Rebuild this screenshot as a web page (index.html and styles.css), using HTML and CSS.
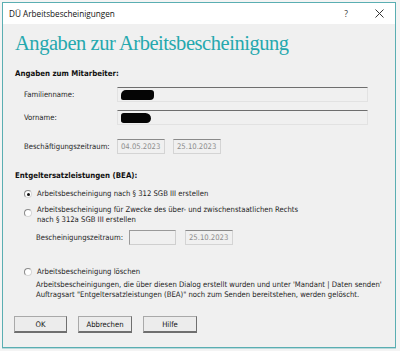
FILE: index.html
```html
<!DOCTYPE html>
<html lang="de">
<head>
<meta charset="utf-8">
<title>DÜ Arbeitsbescheinigungen</title>
<link rel="stylesheet" href="styles.css">
</head>
<body>
<div class="win">
  <div class="titlebar">
    <span class="title">DÜ Arbeitsbescheinigungen</span>
    <span class="tb-btns">
      <span class="help">?</span>
      <svg class="close" width="9" height="9" viewBox="0 0 9 9"><path d="M0.5 0.5 L8.5 8.5 M8.5 0.5 L0.5 8.5" stroke="#333" stroke-width="1" fill="none"/></svg>
    </span>
  </div>
  <div class="content">
    <h1 class="heading">Angaben zur Arbeitsbescheinigung</h1>

    <div class="group-title first">Angaben zum Mitarbeiter:</div>
    <div class="form">
      <div class="row">
        <span class="label">Familienname:</span>
        <div class="input name"><span class="redact r1"></span></div>
      </div>
      <div class="row">
        <span class="label">Vorname:</span>
        <div class="input name"><span class="redact r2"></span></div>
      </div>
      <div class="row dates">
        <span class="label">Beschäftigungszeitraum:</span>
        <div class="input date">04.05.2023</div>
        <div class="input date">25.10.2023</div>
      </div>
    </div>

    <div class="group-title bea">Entgeltersatzleistungen (BEA):</div>
    <div class="option opt1">
      <span class="radio checked"></span>
      <span class="opt-text">Arbeitsbescheinigung nach § 312 SGB III erstellen</span>
    </div>
    <div class="option opt2">
      <span class="radio"></span>
      <span class="opt-text">Arbeitsbescheinigung für Zwecke des über- und zwischenstaatlichen Rechts<br>nach § 312a SGB III erstellen</span>
    </div>
    <div class="row period">
      <span class="label plabel">Bescheinigungszeitraum:</span>
      <div class="input pdate empty"></div>
      <div class="input pdate">25.10.2023</div>
    </div>
    <div class="option opt3">
      <span class="radio"></span>
      <span class="opt-text">Arbeitsbescheinigung löschen</span>
    </div>
    <p class="desc">Arbeitsbescheinigungen, die über diesen Dialog erstellt wurden und unter 'Mandant | Daten senden'<br>Auftragsart "Entgeltersatzleistungen (BEA)" noch zum Senden bereitstehen, werden gelöscht.</p>

    <div class="buttons">
      <button class="btn">OK</button>
      <button class="btn">Abbrechen</button>
      <button class="btn">Hilfe</button>
    </div>
  </div>
</div>
</body>
</html>
```

FILE: styles.css
```css
html, body {
  margin: 0;
  padding: 0;
}
body {
  background: #f4f4f4;
  width: 400px;
  height: 351px;
  overflow: hidden;
  font-family: "DejaVu Sans Condensed", "DejaVu Sans", sans-serif;
  font-stretch: condensed;
  font-size: 7.65px;
  color: #1e1e1e;
}
.win {
  margin: 2px 0 0 2px;
  width: 392px;
  border: 1px solid #5aaeb2;
  background: #f0f0f0;
  box-shadow: 0 1px 0 #b9d9db;
}
.titlebar {
  height: 21px;
  background: #ffffff;
  display: flex;
  align-items: center;
  justify-content: space-between;
}
.title {
  font-family: "Open Sans", "Noto Sans", sans-serif;
  font-stretch: normal;
  font-size: 8.2px;
  color: #111;
  margin-left: 6px;
  margin-top: -1px;
}
.tb-btns {
  display: flex;
  align-items: center;
  margin-right: 11px;
}
.help {
  font-family: "Open Sans", "Noto Sans", sans-serif;
  font-stretch: normal;
  font-size: 8.5px;
  color: #333;
  margin-right: 27px;
  margin-top: -1px;
}
.close {
  display: block;
  margin-top: -1px;
}
.content {
  padding: 7px 0 14px 12px;
}
.heading {
  margin: 0;
  font-family: "Liberation Serif", serif;
  font-weight: normal;
  font-size: 20.5px;
  letter-spacing: -0.45px;
  line-height: 24px;
  color: #25a8ae;
}
.group-title {
  font-weight: bold;
  font-size: 7.8px;
  line-height: 12px;
  color: #111;
}
.group-title.first {
  margin-top: 13px;
}
.form {
  margin-top: 7px;
  margin-left: 9px;
  display: flex;
  flex-direction: column;
  gap: 8px;
}
.row {
  display: flex;
  align-items: center;
}
.row.dates {
  margin-top: 6px;
  gap: 8px;
}
.label {
  width: 93px;
  flex: none;
}
.row.dates .label {
  margin-right: -8px;
}
.input {
  height: 15px;
  box-sizing: border-box;
  background: #f0f0f0;
  border: 1px solid #e2e2e2;
  border-top-color: #6e6e6e;
  position: relative;
  display: flex;
  align-items: center;
  padding-left: 3px;
  color: #8d8d8d;
}
.input.name {
  width: 251px;
}
.input.date {
  width: 48px;
  border-color: #d4d4d4;
  border-top-color: #8a8a8a;
}
.redact {
  display: block;
  background: #050505;
  height: 10px;
  border-radius: 5px 3px 4px 2px;
}
.redact.r1 {
  width: 33px;
  margin-left: 0;
}
.redact.r2 {
  width: 30px;
  border-radius: 3px 6px 5px 3px;
}
.group-title.bea {
  margin-top: 16px;
}
.option {
  display: flex;
  align-items: flex-start;
  margin-left: 9px;
  line-height: 10px;
}
.opt1 {
  margin-top: 7px;
}
.opt2 {
  margin-top: 6px;
}
.opt2 .radio {
  margin-top: 4px;
}
.opt3 {
  margin-top: 22px;
}
.radio {
  width: 8px;
  height: 8px;
  box-sizing: border-box;
  border-radius: 50%;
  border: 1px solid #8a8a8a;
  border-right-color: #d6d6d6;
  border-bottom-color: #d6d6d6;
  background: #ffffff;
  margin: 1px 5px 0 0;
  flex: none;
  display: flex;
  align-items: center;
  justify-content: center;
}
.radio.checked::after {
  content: "";
  width: 3px;
  height: 3px;
  border-radius: 50%;
  background: #111;
}
.row.period {
  margin-top: 5px;
  margin-left: 21px;
  gap: 9px;
}
.plabel {
  width: 93px;
  margin-right: -9px;
}
.input.pdate {
  width: 48px;
  border-color: #d4d4d4;
  border-top-color: #8a8a8a;
}
.input.pdate.empty {
  width: 47px;
  border-color: #9a9a9a;
  border-right-color: #cfcfcf;
  border-bottom-color: #cfcfcf;
}
.desc {
  margin: 3px 0 0 21px;
  line-height: 10px;
}
.buttons {
  margin-top: 16px;
  display: flex;
  gap: 11px;
  margin-left: -1px;
}
.btn {
  width: 53px;
  height: 17px;
  box-sizing: border-box;
  padding: 0;
  font-family: inherit;
  font-stretch: condensed;
  font-size: 7.65px;
  color: #111;
  background: #ececec;
  border: 1px solid #a9a9a9;
  border-right-color: #6f6f6f;
  border-bottom: 2px solid #6f6f6f;
}
.btn + .btn {
  width: 54px;
}
```
